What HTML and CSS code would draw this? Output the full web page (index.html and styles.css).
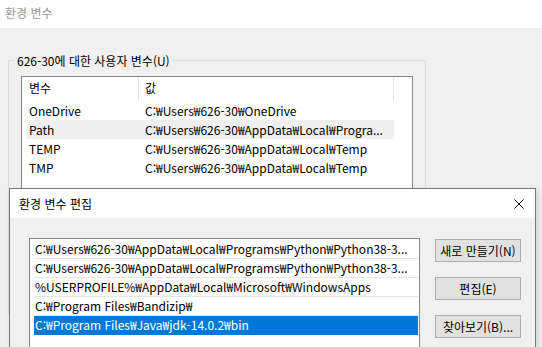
FILE: index.html
```html
<!DOCTYPE html>
<html lang="ko">
<head>
    <meta charset="UTF-8">
    <title>환경 변수</title>
    <link rel="stylesheet" href="styles.css">
</head>
<body>

<div class="window">
    <div class="titlebar">환경 변수</div>
    <div class="client">
        <fieldset class="group">
            <legend>626-30에 대한 사용자 변수(U)</legend>
            <div class="listview">
                <div class="lv-head">
                    <span class="hcol1">변수</span>
                    <span class="hcol2">값</span>
                </div>
                <div class="lv-row"><span class="col1">OneDrive</span><span class="col2">C:₩Users₩626-30₩OneDrive</span></div>
                <div class="lv-row hover"><span class="col1">Path</span><span class="col2">C:₩Users₩626-30₩AppData₩Local₩Progra...</span></div>
                <div class="lv-row"><span class="col1">TEMP</span><span class="col2">C:₩Users₩626-30₩AppData₩Local₩Temp</span></div>
                <div class="lv-row"><span class="col1">TMP</span><span class="col2">C:₩Users₩626-30₩AppData₩Local₩Temp</span></div>
            </div>
        </fieldset>
    </div>
</div>

<div class="dialog">
    <div class="dlg-title">
        <span>환경 변수 편집</span>
        <svg class="close" width="10" height="10" viewBox="0 0 10 10">
            <path d="M0.5 0.5 L9.5 9.5 M9.5 0.5 L0.5 9.5" stroke="#000" stroke-width="1" fill="none"/>
        </svg>
    </div>
    <div class="dlg-body">
        <div class="listbox">
            <div class="lb-item">C:₩Users₩626-30₩AppData₩Local₩Programs₩Python₩Python38-3...</div>
            <div class="lb-item">C:₩Users₩626-30₩AppData₩Local₩Programs₩Python₩Python38-3...</div>
            <div class="lb-item">%USERPROFILE%₩AppData₩Local₩Microsoft₩WindowsApps</div>
            <div class="lb-item">C:₩Program Files₩Bandizip₩</div>
            <div class="lb-item selected">C:₩Program Files₩Java₩jdk-14.0.2₩bin</div>
        </div>
        <div class="buttons">
            <div class="btn">새로 만들기(N)</div>
            <div class="btn">편집(E)</div>
            <div class="btn">찾아보기(B)...</div>
        </div>
    </div>
</div>

</body>
</html>
```

FILE: styles.css
```css
body {
    margin: 0;
    width: 542px;
    height: 347px;
    overflow: hidden;
    position: relative;
    background-color: #f0f0f0;
    font-family: "Noto Sans CJK KR", "Noto Sans", sans-serif;
    font-size: 12px;
    color: #000;
}

.titlebar {
    height: 28px;
    line-height: 26px;
    background-color: #fff;
    color: #999;
    padding-left: 5px;
}

.client {
    padding: 24px 0 0 8px;
}

.group {
    width: 391px;
    height: 260px;
    margin: 0;
    padding: 0 12px;
    border: 1px solid #dcdcdc;
}

.group legend {
    margin-left: -7px;
    padding: 0 3px;
    line-height: 17px;
}

.listview {
    margin-top: 7px;
    width: 390px;
    height: 200px;
    border: 1px solid #828790;
    background-color: #fff;
}

.lv-head {
    display: flex;
    height: 24px;
    line-height: 22px;
}

.hcol1 {
    width: 109px;
    padding-left: 7px;
    border-right: 1px solid #e5e5e5;
}

.hcol2 {
    width: 248px;
    padding-left: 6px;
    border-right: 1px solid #e5e5e5;
}

.lv-row {
    display: flex;
    margin-left: 5px;
    width: 367px;
    height: 19px;
    line-height: 19px;
    white-space: nowrap;
}

.lv-row.hover {
    background-color: #efefef;
}

.col1 {
    width: 116px;
    padding-left: 2px;
}

.col2 {
    overflow: hidden;
}

.dialog {
    position: absolute;
    left: 9px;
    top: 188px;
    width: 525px;
    height: 158px;
    border: 1px solid #7a7a7a;
    border-bottom: none;
    background-color: #f0f0f0;
    box-shadow: 2px 2px 6px rgba(0, 0, 0, 0.15);
}

.dlg-title {
    display: flex;
    justify-content: space-between;
    align-items: center;
    height: 29px;
    padding: 0 11px 0 9px;
    background-color: #fff;
}

.dlg-body {
    display: flex;
    padding: 20px 0 0 19px;
}

.listbox {
    width: 389px;
    height: 108px;
    border: 1px solid #828790;
    border-bottom: none;
    background-color: #fff;
    padding-top: 1px;
}

.lb-item {
    margin: 0 1px 0 4px;
    height: 18px;
    line-height: 18px;
    padding-left: 1px;
    border-bottom: 1px solid #e5e5e5;
    white-space: nowrap;
    overflow: hidden;
}

.lb-item.selected {
    background-color: #0078d7;
    color: #fff;
    border-bottom-color: #0078d7;
}

.buttons {
    display: flex;
    flex-direction: column;
    margin-left: 15px;
}

.btn {
    width: 84px;
    height: 21px;
    line-height: 21px;
    margin-top: 1px;
    margin-bottom: 14px;
    text-align: center;
    background-color: #e1e1e1;
    border: 1px solid #adadad;
}

.btn:last-child {
    margin-bottom: 0;
}
```
